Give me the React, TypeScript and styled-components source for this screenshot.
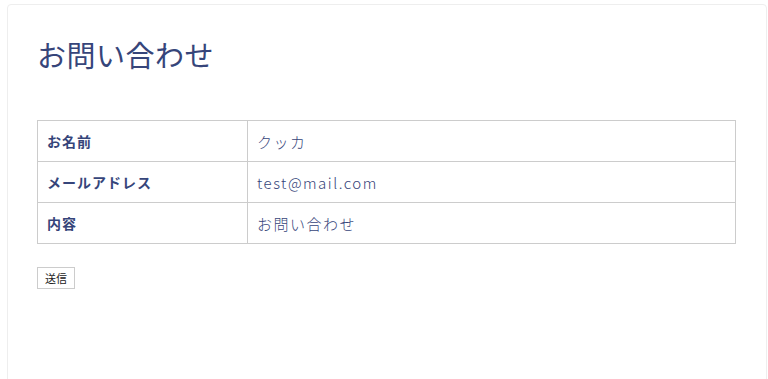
import React from "react";
import styled, { createGlobalStyle } from "styled-components";

const Global = createGlobalStyle`
  html, body { margin: 0; padding: 0; background: #ffffff; }
  body { font-family: "Noto Sans CJK JP", "Noto Sans", sans-serif; }
`;

const Card = styled.div`
  margin: 4px 1px 0 7px;
  min-height: 420px;
  box-sizing: border-box;
  border: 1px solid #eeeeee;
  border-radius: 4px;
  background: #fff;
  padding: 27px 30px 0 29px;
`;

const Title = styled.h1`
  margin: 0 0 44px 0;
  font-size: 29px;
  line-height: 44px;
  font-weight: 400;
  color: #36457a;
  letter-spacing: 0.5px;
`;

const Table = styled.table`
  width: 100%;
  border-collapse: collapse;
  border: 1px solid #cccccc;
`;

const Row = styled.tr`
  height: 41px;
`;

const Label = styled.th`
  width: 210px;
  box-sizing: border-box;
  border: 1px solid #cccccc;
  padding: 0 10px 0 9px;
  text-align: left;
  font-size: 14px;
  font-weight: 700;
  letter-spacing: 1px;
  color: #36457a;
`;

const Value = styled.td`
  border: 1px solid #cccccc;
  padding: 0 9px;
  font-size: 15px;
  font-weight: 300;
  letter-spacing: 1.5px;
  color: #36457a;
`;

const Submit = styled.button`
  margin-top: 23px;
  height: 22px;
  width: 38px;
  padding: 0;
  border: 1px solid #cccccc;
  background: #ffffff;
  font-family: "Noto Sans CJK JP", sans-serif;
  font-size: 11px;
  color: #222;
  line-height: 20px;
`;

const rows = [
  { label: "お名前", value: "クッカ" },
  { label: "メールアドレス", value: "test@mail.com" },
  { label: "内容", value: "お問い合わせ" },
];

export default function App() {
  return (
    <>
      <Global />
      <Card>
        <Title>お問い合わせ</Title>
        <Table>
          <tbody>
            {rows.map((r) => (
              <Row key={r.label}>
                <Label>{r.label}</Label>
                <Value>{r.value}</Value>
              </Row>
            ))}
          </tbody>
        </Table>
        <Submit>送信</Submit>
      </Card>
    </>
  );
}
